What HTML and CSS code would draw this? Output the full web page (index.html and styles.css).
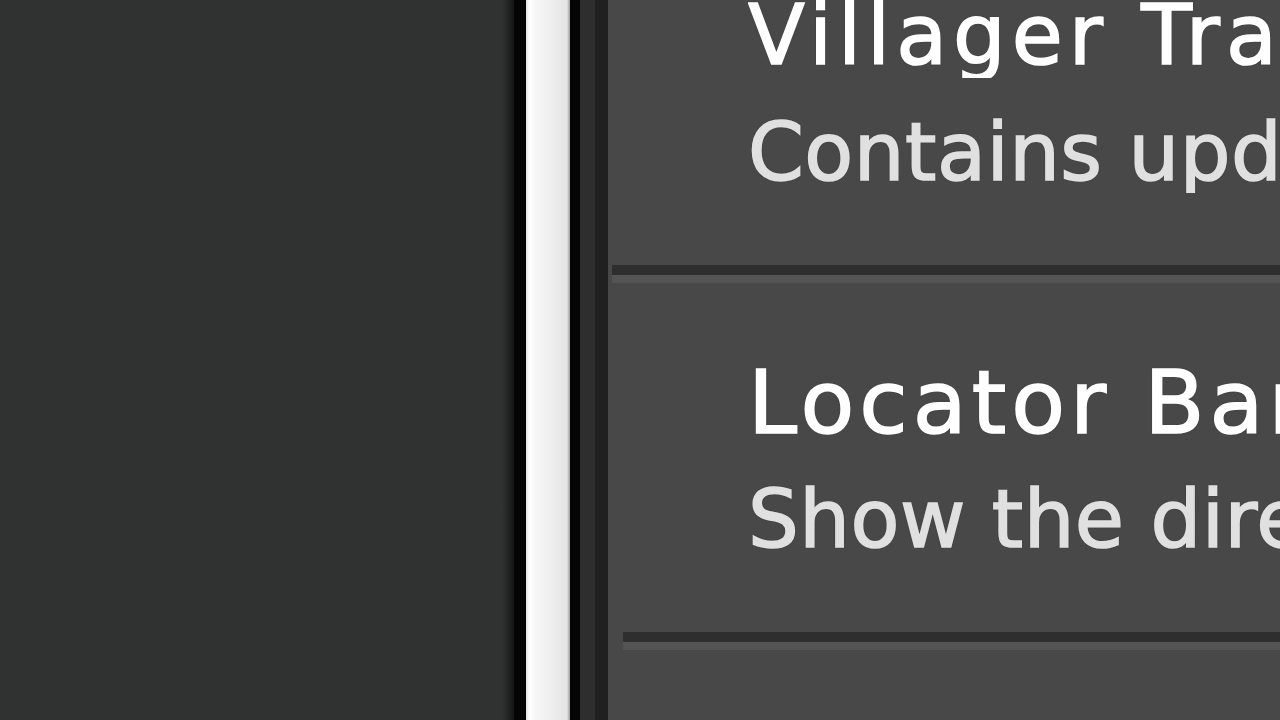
FILE: index.html
```html
<!DOCTYPE html>
<html lang="en">
<head>
<meta charset="utf-8">
<title>Experiments</title>
<link rel="stylesheet" href="styles.css">
</head>
<body>
<div class="screen">
  <div class="backdrop"></div>
  <div class="scrollbar">
    <div class="track-edge"></div>
    <div class="thumb"></div>
    <div class="track-edge right"></div>
  </div>
  <div class="gutter">
    <div class="gutter-a"></div>
    <div class="gutter-b"></div>
  </div>
  <div class="panel">
    <div class="list">
      <div class="card first">
        <div class="sep"></div>
        <div class="body">
          <div class="title">Villager Trade Rebalance</div>
          <div class="desc">Contains updated Villager trades</div>
        </div>
      </div>
      <div class="card">
        <div class="sep"></div>
        <div class="body">
          <div class="title big">Locator Bar</div>
          <div class="desc">Show the direction to players on the screen</div>
        </div>
      </div>
      <div class="card">
        <div class="sep shifted"></div>
      </div>
    </div>
  </div>
</div>
</body>
</html>
```

FILE: styles.css
```css
html, body {
  margin: 0;
  padding: 0;
  width: 1280px;
  height: 720px;
  overflow: hidden;
  background: #303131;
}

.screen {
  display: flex;
  width: 1280px;
  height: 720px;
  overflow: hidden;
}

.backdrop {
  width: 514px;
  flex: none;
  background: linear-gradient(90deg, #303232 0, #303232 502px, #151515 514px);
}

.scrollbar {
  display: flex;
  flex: none;
}

.track-edge {
  width: 12px;
  background: #050505;
}

.track-edge.right {
  width: 10px;
}

.thumb {
  width: 44px;
  background: linear-gradient(90deg, #e0e0e0 0, #ffffff 3px, #f6f6f6 10px, #ececec 30px, #e4e4e4 41px, #9a9a9a 44px);
}

.gutter {
  display: flex;
  flex: none;
}

.gutter-a {
  width: 15px;
  background: #2e2e2e;
}

.gutter-b {
  width: 13px;
  background: #202020;
}

.panel {
  flex: 1;
  background: #484848;
  overflow: hidden;
  padding-left: 4px;
}

.list {
  display: flex;
  flex-direction: column;
}

.card {
  display: flex;
  flex-direction: column;
  height: 367px;
  flex: none;
}

.card.first {
  margin-top: -102px;
}

.sep {
  height: 10px;
  background: #2e2e2e;
  border-bottom: 8px solid #545454;
  box-sizing: content-box;
}

.sep.shifted {
  margin-left: 11px;
}

.body {
  padding: 78px 0 0 136px;
  display: flex;
  flex-direction: column;
  gap: 35px;
}

.title, .desc {
  white-space: nowrap;
  overflow: hidden;
  font-family: "DejaVu Sans", "Liberation Sans", sans-serif;
  -webkit-text-stroke: 1.6px currentColor;
  text-shadow: 0 0 2px rgba(0, 0, 0, 0.5);
}

.title {
  color: #ffffff;
  font-size: 83px;
  line-height: 84px;
  height: 84px;
  letter-spacing: 6px;
}

.title.big {
  font-size: 88px;
  letter-spacing: 5px;
}

.desc {
  color: #e0e0e0;
  font-size: 80px;
  line-height: 80px;
  height: 80px;
  letter-spacing: 0.5px;
}
```
